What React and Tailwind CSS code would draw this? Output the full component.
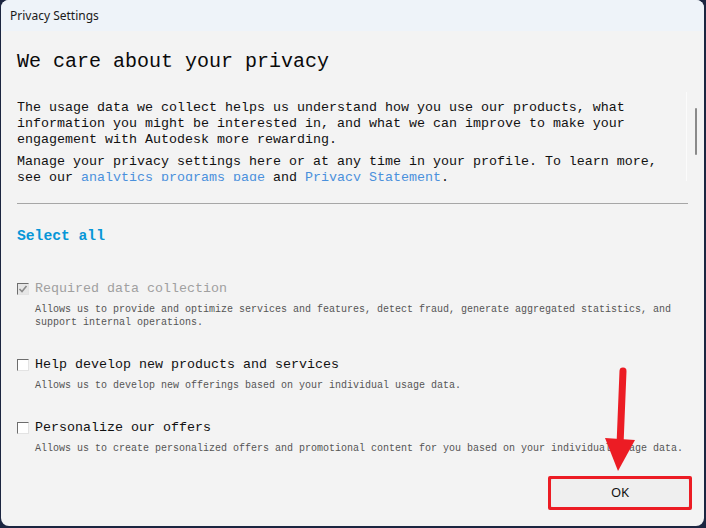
import React from 'react'

const mono = { fontFamily: '"Liberation Mono", "DejaVu Sans Mono", monospace' }

function Box({ checked, disabled }) {
  return (
    <span
      className={`inline-flex items-center justify-center w-[12px] h-[12px] shrink-0 border border-t-[#6d6d6d] border-l-[#6d6d6d] border-b-[#e3e3e3] border-r-[#e3e3e3] ${disabled ? 'bg-[#e6e6e6]' : 'bg-white'}`}
    >
      {checked && (
        <svg width="10" height="10" viewBox="0 0 10 10">
          <path d="M1.5 5 L4 7.5 L8.5 2" fill="none" stroke="#8a8a8a" strokeWidth="1.6" />
        </svg>
      )}
    </span>
  )
}

function Option({ label, desc, checked, disabled, className = '' }) {
  return (
    <div className={className}>
      <div className="flex items-center gap-[6px] h-[16px]">
        <Box checked={checked} disabled={disabled} />
        <span className={`text-[13.33px] leading-[16px] ${disabled ? 'text-[#a0a0a0]' : 'text-[#111]'}`}>{label}</span>
      </div>
      <div className="pl-[18px] mt-[6px] text-[10px] leading-[13px] text-[#555]">
        {desc.map((l, i) => (
          <div key={i} className="whitespace-pre">{l}</div>
        ))}
      </div>
    </div>
  )
}

export default function App() {
  return (
    <div className="w-[706px] h-[528px] bg-[#1b2540] overflow-hidden">
      <div className="relative ml-[1px] w-[703px] h-[526px] rounded-[8px] bg-[#f3f3f3] overflow-hidden">
        {/* title bar */}
        <div
          className="h-[31px] bg-[#eef3f9] flex items-center pl-[9px] text-[12px] text-[#1a1a1a]"
          style={{ fontFamily: '"Noto Sans", "Open Sans", sans-serif' }}
        >
          Privacy Settings
        </div>

        <div className="px-[16px]" style={mono}>
          <h1 className="pt-[19px] text-[20px] leading-[24px] text-[#0a0a0a]">We care about your privacy</h1>

          {/* scroll area */}
          <div className="relative mt-[18px] -mr-[14px] h-[89px] overflow-hidden pt-[8px] pr-[16px]">
            <div className="text-[13.33px] leading-[16px] text-[#111]">
              <div className="whitespace-pre">The usage data we collect helps us understand how you use our products, what</div>
              <div className="whitespace-pre">information you might be interested in, and what we can improve to make your</div>
              <div className="whitespace-pre">engagement with Autodesk more rewarding.</div>
              <div className="mt-[6px] whitespace-pre">Manage your privacy settings here or at any time in your profile. To learn more,</div>
              <div className="whitespace-pre">
                see our <span className="text-[#4a90dc]">analytics programs page</span> and{' '}
                <span className="text-[#4a90dc]">Privacy Statement</span>.
              </div>
            </div>
            <div className="absolute right-0 top-0 bottom-0 w-[16px] border-l border-[#fbfbfb]">
              <div className="ml-[8px] mt-[16px] w-[2px] h-[47px] rounded-full bg-[#8a8a8a]" />
            </div>
          </div>

          <div className="mt-[22px] h-px bg-[#a6a6a6]" />

          <div className="mt-[23px] text-[14.67px] leading-[18px] font-bold text-[#0696d7]">Select all</div>

          <Option
            className="mt-[36px]"
            checked
            disabled
            label="Required data collection"
            desc={[
              'Allows us to provide and optimize services and features, detect fraud, generate aggregated statistics, and',
              'support internal operations.',
            ]}
          />
          <Option
            className="mt-[28px]"
            label="Help develop new products and services"
            desc={['Allows us to develop new offerings based on your individual usage data.']}
          />
          <Option
            className="mt-[28px]"
            label="Personalize our offers"
            desc={['Allows us to create personalized offers and promotional content for you based on your individual usage data.']}
          />
        </div>

        {/* footer */}
        <div className="absolute right-[14px] bottom-[18px]">
          <button
            className="w-[140px] h-[30px] bg-[#efefef] border border-[#d0d0d0] rounded-[3px] text-[13px] text-[#111]"
            style={{ fontFamily: '"Noto Sans", "Open Sans", sans-serif' }}
          >
            OK
          </button>
          <div className="absolute -inset-[2px] border-[3px] border-[#ec1c24] rounded-[2px] pointer-events-none" />
        </div>

        {/* annotation arrow */}
        <svg className="absolute left-[595px] top-[365px] pointer-events-none" width="50" height="110" viewBox="0 0 50 110">
          <path d="M27 6 L24 80" stroke="#ec1c24" strokeWidth="7" strokeLinecap="round" fill="none" />
          <path d="M9 73 L39 75 L22 106 Z" fill="#ec1c24" />
        </svg>
      </div>
    </div>
  )
}
